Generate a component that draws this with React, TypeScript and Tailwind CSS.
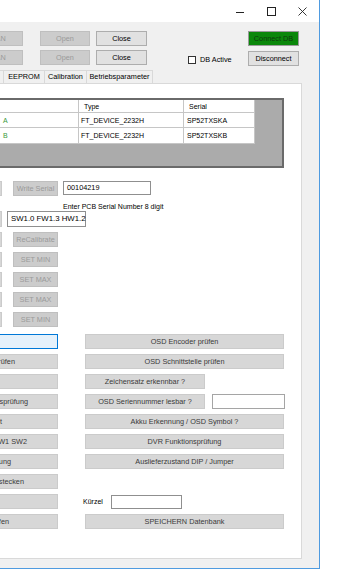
const font = "font-['Liberation_Sans',Arial,sans-serif]";

const variants: Record<string, string> = {
  normal: "bg-[#e1e1e1] border-[#adadad] text-black",
  disabled: "bg-[#cccccc] border-[#bfbfbf] text-[#9a9a9a]",
  flat: "bg-[#d7d7d7] border-[#cbcbcb] text-[#3a3a3a]",
  focus: "bg-[#e5f1fb] border-[#0078d7] text-black",
  green: "bg-[#0a870a] border-[#9a9a9a] text-[#0b3a0b]",
};

function Btn({
  label,
  variant = "normal",
  className = "",
}: {
  label?: string;
  variant?: string;
  className?: string;
}) {
  return (
    <div
      className={`h-[15px] shrink-0 flex items-center justify-center border text-[7.3px] leading-none whitespace-nowrap overflow-hidden ${variants[variant]} ${className}`}
    >
      {label}
    </div>
  );
}

function TextBox({ value, className = "" }: { value?: string; className?: string }) {
  return (
    <div
      className={`h-[14px] shrink-0 flex items-center border border-[#8f8f8f] bg-white pl-[3px] text-[7.3px] leading-none text-black whitespace-nowrap ${className}`}
    >
      {value}
    </div>
  );
}

function SideRow({ label }: { label: string }) {
  return (
    <div className="flex mt-[5px]">
      <Btn variant="flat" className="ml-[-40px] w-[42px]" />
      <Btn variant="disabled" label={label} className="ml-[11px] w-[45px] text-[#8a8a8a]" />
    </div>
  );
}

// left column button: text is right-aligned so only its tail shows
function LeftBtn({ label, pr, variant = "flat" }: { label: string; pr: string; variant?: string }) {
  return <Btn variant={variant} label={label} className={`ml-[-60px] w-[118px] justify-end ${pr}`} />;
}

const rows: { left: string; pr: string; right?: string; narrow?: boolean }[] = [
  { left: "Tastatur prüfen", pr: "pr-[42px]", right: "OSD Schnittstelle prüfen" },
  { left: "LED Test", pr: "pr-[70px]", right: "Zeichensatz erkennbar ?", narrow: true },
  { left: "Funktionsprüfung", pr: "pr-[29px]", right: "OSD Seriennummer lesbar ?", narrow: true },
  { left: "Bereit", pr: "pr-[55px]", right: "Akku Erkennung / OSD Symbol ?" },
  { left: "Taster SW1 SW2", pr: "pr-[30px]", right: "DVR Funktionsprüfung" },
  { left: "Spannung", pr: "pr-[46px]", right: "Auslieferzustand DIP / Jumper" },
  { left: "Kabel abstecken", pr: "pr-[33px]" },
];

export default function App() {
  return (
    <div className={`w-[350px] h-[570px] bg-white overflow-hidden ${font}`}>
      <div className="w-[320px] h-[569px] border-r border-b border-[#4f9be0] bg-[#f0f0f0] overflow-hidden flex flex-col">
        {/* title bar */}
        <div className="h-[22px] shrink-0 bg-white flex justify-end pr-[1px]">
          <div className="w-[31px] flex items-center justify-center">
            <svg width="9" height="9" viewBox="0 0 9 9">
              <path d="M0 5.5H8" stroke="#222" strokeWidth="1" />
            </svg>
          </div>
          <div className="w-[31px] flex items-center justify-center">
            <svg width="9" height="9" viewBox="0 0 9 9">
              <rect x="0.5" y="0.5" width="8" height="8" fill="none" stroke="#222" strokeWidth="1" />
            </svg>
          </div>
          <div className="w-[31px] flex items-center justify-center">
            <svg width="9" height="9" viewBox="0 0 9 9">
              <path d="M0.5 0.5L8.5 8.5M8.5 0.5L0.5 8.5" stroke="#222" strokeWidth="0.9" />
            </svg>
          </div>
        </div>

        <div className="flex-1 flex flex-col pt-[9px]">
          <div className="flex">
            <Btn variant="disabled" label="CAN" className="ml-[-27px] w-[50px]" />
            <Btn variant="disabled" label="Open" className="ml-[17px] w-[50px]" />
            <Btn label="Close" className="ml-[6px] w-[51px]" />
            <Btn variant="green" label="Connect DB" className="ml-[101px] w-[51px]" />
          </div>
          <div className="flex mt-[4px]">
            <Btn variant="disabled" label="CAN" className="ml-[-27px] w-[50px]" />
            <Btn variant="disabled" label="Open" className="ml-[17px] w-[50px]" />
            <Btn label="Close" className="ml-[6px] w-[51px]" />
            <div className="ml-[41px] w-[60px] flex items-start pt-[6px]">
              <div className="w-[8px] h-[8px] border border-[#333] bg-white" />
              <span className="ml-[4px] text-[7.3px] leading-[8px] text-black">DB Active</span>
            </div>
            <Btn label="Disconnect" className="mt-[1px] w-[51px]" />
          </div>

          {/* tabs */}
          <div className="flex mt-[4px] h-[13px] text-[7.3px] leading-none text-black">
            <div className="ml-[-40px] w-[44px] border-t border-r border-[#d9d9d9]" />
            <div className="w-[41px] border-t border-r border-[#d9d9d9] flex items-center justify-center">EEPROM</div>
            <div className="w-[42px] border-t border-r border-[#d9d9d9] flex items-center justify-center">Calibration</div>
            <div className="w-[66px] border-t border-r border-[#d9d9d9] flex items-center justify-center">Betriebsparameter</div>
          </div>

          <div className="ml-[-1px] w-[303px] h-[476px] shrink-0 bg-white border border-[#d9d9d9] flex flex-col">
            {/* grid */}
            <div className="mt-[14px] ml-[-20px] w-[304px] h-[70px] shrink-0 border-2 border-[#6a6a6a] bg-[#ababab] text-[7px] leading-none text-black">
              <div className="flex h-[13px]">
                <div className="w-[97px] bg-white border-r border-b border-[#c6c6c6]" />
                <div className="w-[105px] bg-white border-r border-b border-[#c6c6c6] pl-[5px] flex items-center">Type</div>
                <div className="w-[71px] bg-white border-r border-b border-[#c6c6c6] pl-[5px] flex items-center">Serial</div>
              </div>
              <div className="flex h-[15px]">
                <div className="w-[97px] bg-white border-r border-b border-[#c6c6c6] pl-[21px] flex items-center text-[#3c9a3c]">A</div>
                <div className="w-[105px] bg-white border-r border-b border-[#c6c6c6] pl-[2px] flex items-center">FT_DEVICE_2232H</div>
                <div className="w-[71px] bg-white border-r border-b border-[#c6c6c6] pl-[3px] flex items-center">SP52TXSKA</div>
              </div>
              <div className="flex h-[16px]">
                <div className="w-[97px] bg-white border-r border-b border-[#c6c6c6] pl-[21px] flex items-center text-[#3c9a3c]">B</div>
                <div className="w-[105px] bg-white border-r border-b border-[#c6c6c6] pl-[2px] flex items-center">FT_DEVICE_2232H</div>
                <div className="w-[71px] bg-white border-r border-b border-[#c6c6c6] pl-[3px] flex items-center">SP52TXSKB</div>
              </div>
            </div>

            <div className="flex mt-[13px]">
              <Btn variant="flat" className="ml-[-40px] w-[42px]" />
              <Btn variant="disabled" label="Write Serial" className="ml-[11px] w-[45px] text-[#8a8a8a]" />
              <TextBox value="00104219" className="ml-[5px] w-[88px]" />
            </div>
            <div className="mt-[5px] ml-[63px] h-[10px] flex items-center text-[7px] leading-none text-black">
              Enter PCB Serial Number 8 digit
            </div>
            <div className="flex">
              <Btn variant="flat" className="ml-[-40px] w-[42px] h-[16px]" />
              <TextBox value="SW1.0 FW1.3 HW1.2" className="ml-[5px] w-[79px] h-[16px] text-[7.8px] pl-[2px]" />
            </div>
            <SideRow label="ReCalibrate" />
            <SideRow label="SET MIN" />
            <SideRow label="SET MAX" />
            <SideRow label="SET MAX" />
            <SideRow label="SET MIN" />

            <div className="flex mt-[7px]">
              <LeftBtn label="Alles prüfen" pr="pr-[70px]" variant="focus" />
              <Btn variant="flat" label="OSD Encoder prüfen" className="ml-[27px] w-[199px]" />
            </div>
            {rows.map((r) => (
              <div key={r.left} className="flex mt-[5px]">
                <LeftBtn label={r.left} pr={r.pr} />
                {r.right && (
                  <Btn variant="flat" label={r.right} className={`ml-[27px] ${r.narrow ? "w-[120px]" : "w-[199px]"}`} />
                )}
                {r.right === "OSD Seriennummer lesbar ?" && (
                  <TextBox className="ml-[7px] w-[73px] h-[15px] bg-[#f3f3f3] border-[#a5a5a5]" />
                )}
              </div>
            ))}
            <div className="flex mt-[5px] items-center">
              <LeftBtn label="Reset" pr="pr-[80px]" />
              <span className="ml-[25px] w-[28px] text-[7px] leading-none text-black">Kürzel</span>
              <TextBox className="w-[71px]" />
            </div>
            <div className="flex mt-[5px]">
              <LeftBtn label="Tasten prüfen" pr="pr-[48px]" />
              <Btn variant="flat" label="SPEICHERN Datenbank" className="ml-[27px] w-[199px]" />
            </div>
          </div>
        </div>
      </div>
    </div>
  );
}
